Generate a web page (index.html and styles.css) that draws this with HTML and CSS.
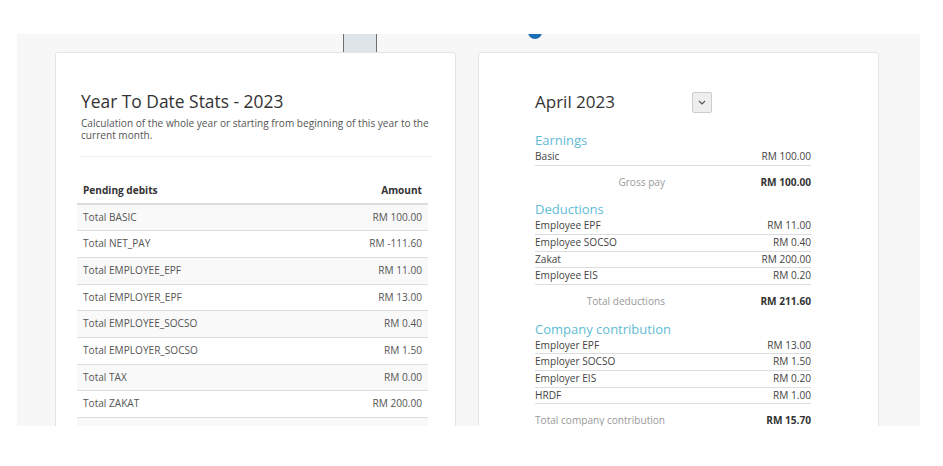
FILE: index.html
```html
<!DOCTYPE html>
<html lang="en">
<head>
<meta charset="utf-8">
<title>Payroll</title>
<link rel="stylesheet" href="styles.css">
</head>
<body>
<div class="panel">
  <div class="tab"></div>
  <div class="dot"></div>

  <section class="card card-ytd">
    <h3 class="ytd-title">Year To Date Stats - 2023</h3>
    <p class="ytd-desc">Calculation of the whole year or starting from beginning of this year to the current month.</p>
    <hr class="ytd-rule">
    <table class="ytd-table">
      <thead>
        <tr><th>Pending debits</th><th class="num">Amount</th></tr>
      </thead>
      <tbody>
        <tr><td>Total BASIC</td><td class="num">RM 100.00</td></tr>
        <tr><td>Total NET_PAY</td><td class="num">RM -111.60</td></tr>
        <tr><td>Total EMPLOYEE_EPF</td><td class="num">RM 11.00</td></tr>
        <tr><td>Total EMPLOYER_EPF</td><td class="num">RM 13.00</td></tr>
        <tr><td>Total EMPLOYEE_SOCSO</td><td class="num">RM 0.40</td></tr>
        <tr><td>Total EMPLOYER_SOCSO</td><td class="num">RM 1.50</td></tr>
        <tr><td>Total TAX</td><td class="num">RM 0.00</td></tr>
        <tr><td>Total ZAKAT</td><td class="num">RM 200.00</td></tr>
        <tr><td>Total EARNINGS</td><td class="num">RM 100.00</td></tr>
        <tr><td>Total DEDUCTIONS</td><td class="num">RM 211.60</td></tr>
      </tbody>
    </table>
  </section>

  <section class="card card-month">
    <div class="month-head">
      <h3 class="month-title">April 2023</h3>
      <button class="month-btn" type="button" aria-label="Select month">
        <svg width="8" height="5" viewBox="0 0 8 5"><path d="M1 1l3 3 3-3" fill="none" stroke="#555" stroke-width="1.2"/></svg>
      </button>
    </div>

    <h4 class="sec-title">Earnings</h4>
    <div class="row"><span>Basic</span><span>RM 100.00</span></div>
    <div class="total"><span class="total-label">Gross pay</span><span class="total-value">RM 100.00</span></div>

    <h4 class="sec-title">Deductions</h4>
    <div class="row"><span>Employee EPF</span><span>RM 11.00</span></div>
    <div class="row"><span>Employee SOCSO</span><span>RM 0.40</span></div>
    <div class="row"><span>Zakat</span><span>RM 200.00</span></div>
    <div class="row"><span>Employee EIS</span><span>RM 0.20</span></div>
    <div class="total"><span class="total-label">Total deductions</span><span class="total-value">RM 211.60</span></div>

    <h4 class="sec-title">Company contribution</h4>
    <div class="row"><span>Employer EPF</span><span>RM 13.00</span></div>
    <div class="row"><span>Employer SOCSO</span><span>RM 1.50</span></div>
    <div class="row"><span>Employer EIS</span><span>RM 0.20</span></div>
    <div class="row"><span>HRDF</span><span>RM 1.00</span></div>
    <div class="total"><span class="total-label">Total company contribution</span><span class="total-value">RM 15.70</span></div>
  </section>
</div>
</body>
</html>
```
FILE: styles.css
```css
* { box-sizing: border-box; }
html, body { margin: 0; background: #fff; }
body { font-family: "Open Sans", "Liberation Sans", sans-serif; }

.panel {
  position: relative;
  margin: 34px 0 0 17px;
  width: 903px;
  height: 392px;
  background: #f7f7f7;
  overflow: hidden;
  padding: 18px 0 0 38px;
  display: flex;
  gap: 22px;
  align-items: flex-start;
}
.tab {
  position: absolute;
  left: 326px;
  top: 0;
  width: 34px;
  height: 18px;
  background: #dfe4e8;
  border-left: 1px solid #6f6f6f;
  border-right: 1px solid #6f6f6f;
}
.dot {
  position: absolute;
  left: 511px;
  top: -9px;
  width: 14px;
  height: 14px;
  border-radius: 50%;
  background: #1d6fb5;
}
.card {
  flex: none;
  width: 401px;
  height: 600px;
  background: #fff;
  border: 1px solid #e4e4e4;
  border-radius: 3px;
}

/* left card */
.card-ytd { padding: 38px 24px 0 25px; }
.ytd-title { margin: 0; font-size: 17.4px; line-height: 20px; font-weight: 400; color: #333; }
.ytd-desc { margin: 6px 0 0; font-size: 10.1px; line-height: 12px; color: #555; }
.ytd-rule { margin: 15px 0 0; border: 0; border-top: 1px solid #eee; height: 0; }
.ytd-table {
  margin: 20px 0 0 -4px;
  width: 351px;
  border-collapse: collapse;
  font-size: 10.1px;
  color: #555;
}
.ytd-table th, .ytd-table td { padding: 5px 6px; line-height: 15.67px; text-align: left; }
.ytd-table th { padding: 6px 6px 4px; color: #333; font-weight: 700; border-bottom: 2px solid #ddd; }
.ytd-table td { border-bottom: 1px solid #ddd; }
.ytd-table .num { text-align: right; }
.ytd-table tbody tr:nth-child(odd) { background: #f9f9f9; }

/* right card */
.card-month { padding: 37px 67px 0 56px; }
.month-head { display: flex; align-items: center; height: 24px; margin-bottom: 17px; }
.month-title { margin: 0; width: 157px; font-size: 17px; line-height: 24px; font-weight: 400; color: #333; }
.month-btn {
  width: 20px;
  height: 21px;
  padding: 0;
  border: 1px solid #ccc;
  border-radius: 2px;
  background: #eee;
  display: flex;
  align-items: center;
  justify-content: center;
}
.sec-title { margin: 0; font-size: 13px; line-height: 18px; font-weight: 400; color: #5fbcd5; }
.row {
  display: flex;
  justify-content: space-between;
  font-size: 10.1px;
  line-height: 15.67px;
  color: #444;
  border-bottom: 1px solid #ddd;
}
.total {
  display: grid;
  grid-template-columns: 130px 1fr;
  margin: 9px 0 10px;
  font-size: 10.1px;
  line-height: 15.67px;
}
.total-label { text-align: right; color: #999; white-space: nowrap; }
.total-value { text-align: right; font-weight: 700; color: #333; }
```
